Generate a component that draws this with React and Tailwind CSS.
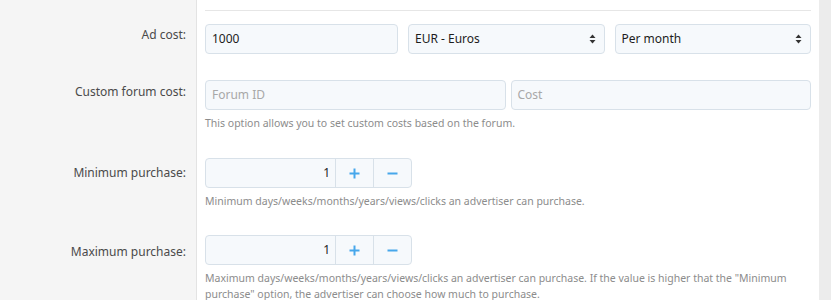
import React from 'react';

const font = { fontFamily: '"Noto Sans", "Open Sans", sans-serif' };

function Label({ children, className = '' }) {
  return (
    <div className={`w-[197px] shrink-0 bg-[#f5f5f5] border-r border-[#e3e3e3] pr-[10px] text-right text-[12px] leading-[16px] text-[#4a4a4a] ${className}`}>
      {children}
    </div>
  );
}

function Arrows() {
  return (
    <svg width="7" height="10" viewBox="0 0 7 10" className="text-[#333]">
      <path d="M3.5 0.5 L6.5 4 L0.5 4 Z" fill="currentColor" />
      <path d="M0.5 6 L6.5 6 L3.5 9.5 Z" fill="currentColor" />
    </svg>
  );
}

function Select({ value }) {
  return (
    <div className="flex-1 h-[30px] flex items-center justify-between px-[6px] pr-[8px] rounded-[4px] border border-[#d8e1e9] bg-[#f6f9fc] text-[12px] text-[#1d1d1d]">
      <span>{value}</span>
      <Arrows />
    </div>
  );
}

function Spinner() {
  return (
    <div className="flex w-[207px] h-[30px] rounded-[4px] border border-[#d8e1e9] bg-[#f6f9fc] text-[12px] text-[#1d1d1d]">
      <div className="flex-1 flex items-center justify-end pr-[5px]">1</div>
      <div className="w-[38px] flex items-center justify-center border-l border-[#d8e1e9]">
        <svg width="11" height="11" viewBox="0 0 11 11"><path d="M5.5 0.5v10M0.5 5.5h10" stroke="#47a7eb" strokeWidth="2" /></svg>
      </div>
      <div className="w-[38px] flex items-center justify-center border-l border-[#d8e1e9]">
        <svg width="11" height="11" viewBox="0 0 11 11"><path d="M0.5 5.5h10" stroke="#47a7eb" strokeWidth="2" /></svg>
      </div>
    </div>
  );
}

function Help({ children }) {
  return <div className="mt-[5px] text-[10.5px] leading-[16px] text-[#8c8c8c]">{children}</div>;
}

export default function App() {
  return (
    <div className="flex h-[300px] w-[831px] overflow-hidden bg-white" style={font}>
      <div className="w-[819px] flex flex-col">
        <div className="flex h-[11px] shrink-0">
          <Label />
          <div className="flex-1 mx-[8px] border-b border-[#e6e6e6]" />
        </div>

        <div className="flex shrink-0">
          <Label className="pt-[16px]">Ad cost:</Label>
          <div className="flex-1 flex gap-[10px] px-[8px] pt-[13px] pb-[13px]">
            <div className="w-[193px] h-[30px] flex items-center px-[6px] rounded-[4px] border border-[#d8e1e9] bg-[#f6f9fc] text-[12px] text-[#1d1d1d]">1000</div>
            <Select value="EUR - Euros" />
            <Select value="Per month" />
          </div>
        </div>

        <div className="flex shrink-0">
          <Label className="pt-[17px]">Custom forum cost:</Label>
          <div className="flex-1 px-[8px] pt-[13px] pb-[13px]">
            <div className="flex gap-[5px]">
              <div className="flex-1 h-[30px] flex items-center px-[6px] rounded-[4px] border border-[#d8e1e9] bg-[#f6f9fc] text-[12px] text-[#a8a8a8]">Forum ID</div>
              <div className="flex-1 h-[30px] flex items-center px-[6px] rounded-[4px] border border-[#d8e1e9] bg-[#f6f9fc] text-[12px] text-[#a8a8a8]">Cost</div>
            </div>
            <Help>This option allows you to set custom costs based on the forum.</Help>
          </div>
        </div>

        <div className="flex shrink-0">
          <Label className="pt-[21px]">Minimum purchase:</Label>
          <div className="flex-1 px-[8px] pt-[14px] pb-[13px]">
            <Spinner />
            <Help>Minimum days/weeks/months/years/views/clicks an advertiser can purchase.</Help>
          </div>
        </div>

        <div className="flex shrink-0 grow">
          <Label className="pt-[22px]">Maximum purchase:</Label>
          <div className="flex-1 px-[8px] pt-[13px]">
            <Spinner />
            <Help>Maximum days/weeks/months/years/views/clicks an advertiser can purchase. If the value is higher that the "Minimum purchase" option, the advertiser can choose how much to purchase.</Help>
          </div>
        </div>
      </div>
      <div className="w-[12px] bg-[#ececec]" />
    </div>
  );
}
